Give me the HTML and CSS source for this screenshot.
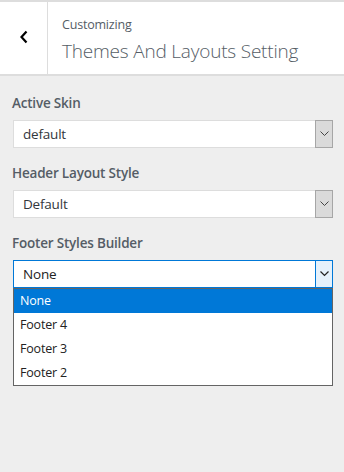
FILE: index.html
```html
<!DOCTYPE html>
<html>
<head>
<meta charset="utf-8">
<link rel="stylesheet" href="styles.css">
</head>
<body>
<div class="panel">
  <header class="head">
    <button class="back" aria-label="Back">
      <svg width="10" height="14" viewBox="0 0 10 14"><path d="M7.5 1.5 L2.5 7 L7.5 12.5" fill="none" stroke="#000" stroke-width="2.2"/></svg>
    </button>
    <div class="titles">
      <div class="sub">Customizing</div>
      <div class="title">Themes And Layouts Setting</div>
    </div>
  </header>
  <main class="controls">
    <div class="field">
      <div class="label">Active Skin</div>
      <div class="select">
        <span class="value">default</span>
        <span class="arrow"><svg width="9" height="6" viewBox="0 0 9 6"><path d="M0.5 0.5 L4.5 4.5 L8.5 0.5" fill="none" stroke="#444" stroke-width="1"/></svg></span>
      </div>
    </div>
    <div class="field">
      <div class="label">Header Layout Style</div>
      <div class="select">
        <span class="value">Default</span>
        <span class="arrow"><svg width="9" height="6" viewBox="0 0 9 6"><path d="M0.5 0.5 L4.5 4.5 L8.5 0.5" fill="none" stroke="#444" stroke-width="1"/></svg></span>
      </div>
    </div>
    <div class="field">
      <div class="label">Footer Styles Builder</div>
      <div class="select-wrap">
        <div class="select open">
          <span class="value">None</span>
          <span class="arrow"><svg width="9" height="6" viewBox="0 0 9 6"><path d="M0.5 0.5 L4.5 4.5 L8.5 0.5" fill="none" stroke="#222" stroke-width="1.2"/></svg></span>
        </div>
        <ul class="menu">
          <li class="opt active">None</li>
          <li class="opt">Footer 4</li>
          <li class="opt">Footer 3</li>
          <li class="opt">Footer 2</li>
        </ul>
      </div>
    </div>
  </main>
</div>
</body>
</html>
```
FILE: styles.css
```css
* { box-sizing: border-box; }
html, body { margin: 0; padding: 0; }
body {
  background: #eeeeee;
  font-family: "Open Sans", "Noto Sans", sans-serif;
  width: 344px;
  height: 472px;
  overflow: hidden;
}
.head {
  display: flex;
  background: #fff;
  border-top: 2px solid #dddddd;
  border-bottom: 2px solid #dddddd;
  height: 76px;
}
.back {
  width: 48px;
  border: 0;
  border-right: 1px solid #dddddd;
  background: #fff;
  padding: 0 0 2px 1px;
  display: flex;
  align-items: center;
  justify-content: center;
}
.titles {
  padding: 14px 0 0 14px;
}
.sub {
  font-size: 12.5px;
  color: #555d66;
  line-height: 18px;
  letter-spacing: -0.2px;
}
.title {
  font-size: 19px;
  font-weight: 300;
  color: #555d66;
  line-height: 28px;
  margin-top: 3px;
  letter-spacing: -0.2px;
}
.controls {
  padding: 17px 11px 0 13px;
}
.field { margin-bottom: 15px; }
.label {
  font-size: 13.5px;
  font-weight: 600;
  color: #555d66;
  line-height: 20px;
  margin-left: -1px;
  margin-bottom: 7px;
  letter-spacing: -0.2px;
}
.select {
  display: flex;
  height: 28px;
  background: #fff;
  border: 1px solid #dddddd;
}
.value {
  flex: 1;
  font-size: 13.5px;
  color: #32373c;
  line-height: 26px;
  padding-left: 9px;
  letter-spacing: -0.2px;
}
.arrow {
  width: 18px;
  margin: -1px -1px -1px 0;
  background: #dadada;
  border: 1px solid #a6a6a6;
  display: flex;
  align-items: center;
  justify-content: center;
}
.select-wrap { position: relative; }
.select.open {
  border: 1px solid #0078d7;
  height: 28px;
}
.select.open .value { color: #222; line-height: 26px; }
.select.open .arrow {
  background: #e5f1fb;
  border-color: #0078d7;
}
.menu {
  position: absolute;
  left: 0;
  right: 0;
  top: 28px;
  margin: 0;
  padding: 0;
  list-style: none;
  background: #fff;
  border: 1px solid #646464;
}
.opt {
  height: 24px;
  line-height: 24px;
  padding-left: 6px;
  font-size: 12.5px;
  color: #222;
  letter-spacing: -0.2px;
}
.opt.active {
  background: #0078d7;
  color: #fff;
}
```
